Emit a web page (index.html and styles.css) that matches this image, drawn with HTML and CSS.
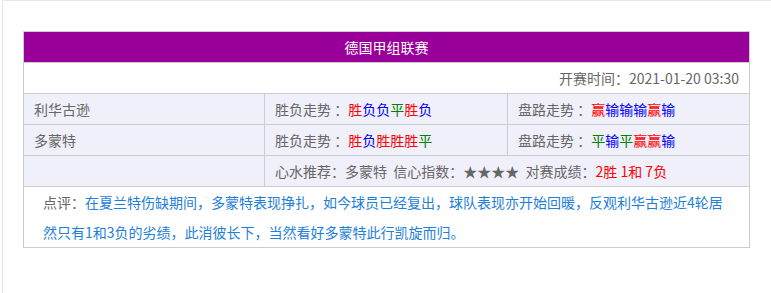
FILE: index.html
```html
<!DOCTYPE html>
<html lang="zh-CN">
<head>
<meta charset="utf-8">
<title>德国甲组联赛</title>
<link rel="stylesheet" href="styles.css">
</head>
<body>
<div class="wrap">
  <table class="match">
    <colgroup>
      <col class="c1"><col class="c2"><col class="c3">
    </colgroup>
    <tr class="head"><td colspan="3">德国甲组联赛</td></tr>
    <tr class="time"><td colspan="3">开赛时间：2021-01-20 03:30</td></tr>
    <tr class="row">
      <td>利华古逊</td>
      <td>胜负走势 ：<span class="r">胜</span><span class="b">负负</span><span class="g">平</span><span class="r">胜</span><span class="b">负</span></td>
      <td>盘路走势 ：<span class="r">赢</span><span class="b">输输输</span><span class="r">赢</span><span class="b">输</span></td>
    </tr>
    <tr class="row">
      <td>多蒙特</td>
      <td>胜负走势 ：<span class="r">胜</span><span class="b">负</span><span class="r">胜胜胜</span><span class="g">平</span></td>
      <td>盘路走势 ：<span class="g">平</span><span class="b">输</span><span class="g">平</span><span class="r">赢赢</span><span class="b">输</span></td>
    </tr>
    <tr class="row">
      <td></td>
      <td colspan="2">心水推荐：多蒙特&nbsp;&nbsp;信心指数：★★★★&nbsp;&nbsp;对赛成绩：<span class="r">2胜 1和 7负</span></td>
    </tr>
    <tr class="note">
      <td colspan="3"><p class="note-text">点评：<span class="blue">在夏兰特伤缺期间，多蒙特表现挣扎，如今球员已经复出，球队表现亦开始回暖，反观利华古逊近4轮居然只有1和3负的劣绩，此消彼长下，当然看好多蒙特此行凯旋而归。</span></p></td>
    </tr>
  </table>
</div>
</body>
</html>
```
FILE: styles.css
```css
html, body {
  margin: 0;
  padding: 0;
  background: #fff;
}
body {
  font-family: "Noto Sans CJK SC", "Noto Sans", sans-serif;
  font-size: 14px;
  color: #666;
}
.wrap {
  margin-left: 2px;
  height: 293px;
  border-top: 1px solid #e6e6e6;
  border-left: 1px solid #e6e6e6;
  padding: 30px 0 0 20px;
  box-sizing: border-box;
  overflow: hidden;
}
.match {
  border-collapse: collapse;
  table-layout: fixed;
  width: 726px;
}
.c1 { width: 241px; }
.c2 { width: 243px; }
.c3 { width: 242px; }
.match td {
  border: 1px solid #cccccc;
  height: 30px;
  padding: 0 10px;
  line-height: 30px;
  white-space: nowrap;
  vertical-align: middle;
}
.head td {
  background: #990099;
  color: #fff;
  text-align: center;
}
.time td {
  background: #fff;
  text-align: right;
}
.row td {
  background: #f0f0fa;
}
.note td {
  background: #fff;
  white-space: normal;
  padding: 0 20px 0 19px;
}
.note-text {
  margin: 0;
  line-height: 30px;
}
.r { color: #ff0000; }
.b { color: #0000ff; }
.g { color: #008000; }
.blue { color: #1e80d8; }
```
